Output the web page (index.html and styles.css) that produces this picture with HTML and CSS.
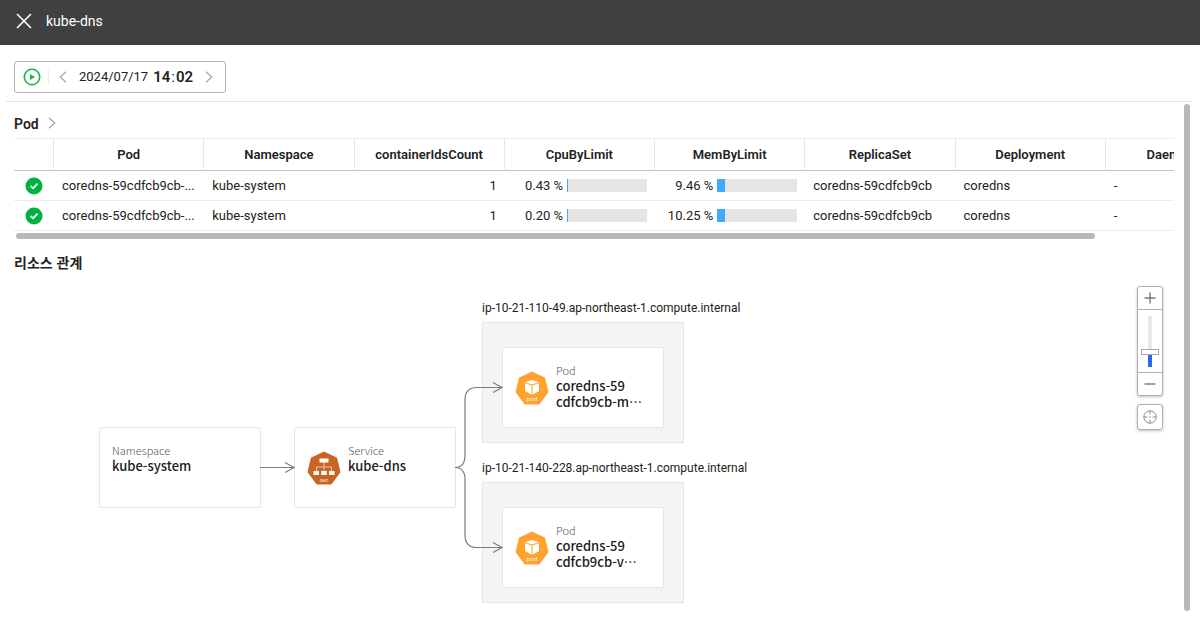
FILE: index.html
```html
<!DOCTYPE html>
<html lang="ko">
<head>
<meta charset="utf-8">
<title>kube-dns</title>
<link rel="stylesheet" href="styles.css">
</head>
<body>
<header class="topbar">
  <button class="icon-button" aria-label="Close">
    <svg width="16" height="16" viewBox="0 0 16 16"><path d="M1 1l14 14M15 1L1 15" fill="none" stroke="#fff" stroke-width="1.6"/></svg>
  </button>
  <h1 class="topbar-title">kube-dns</h1>
</header>

<div class="toolbar">
  <div class="timebox">
    <button class="icon-button" aria-label="Play">
      <svg width="18" height="18" viewBox="0 0 18 18"><circle cx="9" cy="9" r="7.7" fill="none" stroke="#12b84a" stroke-width="1.6"/><path d="M7 6l5 3-5 3z" fill="#12b84a"/></svg>
    </button>
    <span class="divider"></span>
    <button class="icon-button" aria-label="Previous">
      <svg width="8" height="12" viewBox="0 0 8 12"><path d="M7 .7L1.2 6 7 11.3" fill="none" stroke="#a8a8a8" stroke-width="1.3"/></svg>
    </button>
    <time class="time" datetime="2024-07-17T14:02"><span>2024/07/17</span><span class="clock"><b>14</b><span>:</span><b>02</b></span></time>
    <button class="icon-button" aria-label="Next">
      <svg width="8" height="12" viewBox="0 0 8 12"><path d="M1 .7L6.8 6 1 11.3" fill="none" stroke="#a8a8a8" stroke-width="1.3"/></svg>
    </button>
  </div>
</div>

<main class="panel">
  <div class="content">
    <h2 class="section-title">Pod
      <svg width="8" height="12" viewBox="0 0 8 12"><path d="M1 .7L6.8 6 1 11.3" fill="none" stroke="#a8a8a8" stroke-width="1.3"/></svg>
    </h2>
    <div class="table-wrap">
      <table class="grid">
        <colgroup><col class="col-status"><col><col><col><col><col><col><col><col></colgroup>
        <thead>
          <tr><th></th><th>Pod</th><th>Namespace</th><th>containerIdsCount</th><th>CpuByLimit</th><th>MemByLimit</th><th>ReplicaSet</th><th>Deployment</th><th>DaemonSet</th></tr>
        </thead>
        <tbody>
          <tr>
            <td class="status"><svg width="18" height="18" viewBox="0 0 18 18"><circle cx="9" cy="9" r="8.5" fill="#00b341"/><path d="M5.6 9l2.5 2.3 4.4-4.6" fill="none" stroke="#fff" stroke-width="1.8"/></svg></td>
            <td>coredns-59cdfcb9cb-...</td><td>kube-system</td><td class="num">1</td>
            <td><div class="usage">0.43 %<span class="bar"><span class="fill" style="width:0.43%"></span></span></div></td>
            <td><div class="usage">9.46 %<span class="bar"><span class="fill" style="width:9.46%"></span></span></div></td>
            <td>coredns-59cdfcb9cb</td><td>coredns</td><td>-</td>
          </tr>
          <tr>
            <td class="status"><svg width="18" height="18" viewBox="0 0 18 18"><circle cx="9" cy="9" r="8.5" fill="#00b341"/><path d="M5.6 9l2.5 2.3 4.4-4.6" fill="none" stroke="#fff" stroke-width="1.8"/></svg></td>
            <td>coredns-59cdfcb9cb-...</td><td>kube-system</td><td class="num">1</td>
            <td><div class="usage">0.20 %<span class="bar"><span class="fill" style="width:0.2%"></span></span></div></td>
            <td><div class="usage">10.25 %<span class="bar"><span class="fill" style="width:10.25%"></span></span></div></td>
            <td>coredns-59cdfcb9cb</td><td>coredns</td><td>-</td>
          </tr>
        </tbody>
      </table>
    </div>
    <div class="hscroll"><div class="hthumb"></div></div>
    <h2 class="section-title section-title-ko">리소스 관계</h2>

    <div class="canvas">
      <div class="node node-namespace">
        <div><div class="kind">Namespace</div><div class="name">kube-system</div></div>
      </div>
      <div class="node node-service">
        <svg class="node-icon" width="34" height="34" viewBox="0 0 34 34">
          <path d="M17 1.6L29.2 7.5 32.4 20.8 23.9 32.4H10.1L1.6 20.8 4.8 7.5z" fill="#c96424" stroke="#c96424" stroke-width="2" stroke-linejoin="round"/>
          <path d="M17 11v9M9.5 20v-4h15v4" fill="none" stroke="#e9c3ab"/>
          <path d="M12.5 7.5h9v4h-9zM6.5 20H12v4H6.5zM14.2 20h5.6v4h-5.6zM22 20h5.5v4H22z" fill="#fff"/>
          <text x="17" y="31" text-anchor="middle" class="badge-text">svc</text>
        </svg>
        <div><div class="kind">Service</div><div class="name">kube-dns</div></div>
      </div>
      <section class="host host-a">
        <h3 class="host-name">ip-10-21-110-49.ap-northeast-1.compute.internal</h3>
        <div class="host-box">
          <div class="node">
            <svg class="node-icon" width="34" height="34" viewBox="0 0 34 34">
              <path d="M17 1.6L29.2 7.5 32.4 20.8 23.9 32.4H10.1L1.6 20.8 4.8 7.5z" fill="#ffa22e" stroke="#ffa22e" stroke-width="2" stroke-linejoin="round"/>
              <path d="M17 9.1l7 2.2-7 2.3-7-2.3zM10 12.3l6.5 2.2v9.2L10 20zM24 12.3l-6.5 2.2v9.2L24 20z" fill="#fff"/>
              <text x="17" y="30" text-anchor="middle" class="badge-text">pod</text>
            </svg>
            <div><div class="kind">Pod</div><div class="name"><div>coredns-59</div><div>cdfcb9cb-m⋯</div></div></div>
          </div>
        </div>
      </section>
      <section class="host host-b">
        <h3 class="host-name">ip-10-21-140-228.ap-northeast-1.compute.internal</h3>
        <div class="host-box">
          <div class="node">
            <svg class="node-icon" width="34" height="34" viewBox="0 0 34 34">
              <path d="M17 1.6L29.2 7.5 32.4 20.8 23.9 32.4H10.1L1.6 20.8 4.8 7.5z" fill="#ffa22e" stroke="#ffa22e" stroke-width="2" stroke-linejoin="round"/>
              <path d="M17 9.1l7 2.2-7 2.3-7-2.3zM10 12.3l6.5 2.2v9.2L10 20zM24 12.3l-6.5 2.2v9.2L24 20z" fill="#fff"/>
              <text x="17" y="30" text-anchor="middle" class="badge-text">pod</text>
            </svg>
            <div><div class="kind">Pod</div><div class="name"><div>coredns-59</div><div>cdfcb9cb-v⋯</div></div></div>
          </div>
        </div>
      </section>
      <svg class="edges" width="700" height="330" viewBox="0 0 700 330" fill="none" stroke="#7c7c7c" stroke-width="1.2">
        <path d="M246 187.500h34M271 182.500l9 5-9 5"/>
        <path d="M441 187.500q10 0 10-12V120q0-12.500 12-12.500h25M479 102.500l9 5-9 5"/>
        <path d="M441 187.500q10 0 10 12V255q0 12.500 12 12.500h25M479 262.500l9 5-9 5"/>
      </svg>

      <div class="controls">
        <div class="zoom">
          <button class="tool" aria-label="Zoom in"><svg width="12" height="12" viewBox="0 0 12 12"><path d="M6 .5v11M.5 6h11" stroke="#777" stroke-width="1.4"/></svg></button>
          <div class="zoom-track"><input class="slider" type="range" min="0" max="100" value="27" aria-label="Zoom"></div>
          <button class="tool" aria-label="Zoom out"><svg width="12" height="12" viewBox="0 0 12 12"><path d="M.5 6h11" stroke="#777" stroke-width="1.4"/></svg></button>
        </div>
        <button class="tool tool-center" aria-label="Center">
          <svg width="14" height="14" viewBox="0 0 14 14" fill="none" stroke="#8a8a8a"><circle cx="7" cy="7" r="6.2"/><path d="M7 1v3.300M7 9.700V13M1 7h3.300M9.700 7H13"/><circle cx="7" cy="7" r=".8" fill="#8a8a8a" stroke="none"/></svg>
        </button>
      </div>
    </div>
  </div>
  <div class="vscroll"></div>
</main>
</body>
</html>
```
FILE: styles.css
```css
* { box-sizing: border-box; }
body {
  margin: 0;
  min-height: 100vh;
  display: flex;
  flex-direction: column;
  background: #fff;
  color: #222;
  font-family: Roboto, "Noto Sans CJK KR", sans-serif;
  font-size: 13px;
  line-height: 16px;
}
h1, h2, h3 { margin: 0; font-weight: 400; }
svg { display: block; flex: none; }
.badge-text { font-family: "Open Sans", sans-serif; font-size: 6px; fill: #fff; }

.icon-button { display: flex; padding: 0; border: 0; background: none; cursor: pointer; }

.topbar {
  display: flex;
  align-items: center;
  gap: 14px;
  height: 45px;
  padding: 0 16px 3px;
  background: #404040;
  color: #fff;
}
.topbar-title { font-size: 14px; }

.toolbar { padding: 16px 14px 8px; display: flex; }
.timebox {
  display: flex;
  align-items: center;
  height: 32px;
  padding: 0 12px 0 8px;
  border: 1px solid #b5b5b5;
  border-radius: 3px;
}
.divider { width: 1px; height: 14px; margin: 0 10px 0 7px; background: #ececec; }
.time { display: flex; align-items: center; gap: 5px; margin: 0 12px; }
.clock { display: flex; gap: 1px; font-size: 15px; }
.clock b { font-weight: 600; }

.panel {
  flex: 1;
  display: flex;
  margin: 0 8px 0 6px;
  border-top: 1px solid #e4e4e4;
}
.content { flex: 1; min-width: 0; margin: 0 10px 0 8px; }
.vscroll {
  width: 6px;
  margin: 2px 2px 25px 0;
  border-radius: 3px;
  background: #b8b8b8;
}

.section-title {
  display: flex;
  align-items: center;
  gap: 9px;
  padding: 14px 0 5px;
  font-size: 14px;
  line-height: 17px;
  font-weight: 600;
}
.section-title svg { margin-bottom: 4px; }
.section-title-ko { padding: 13px 0 9px; font-family: "Noto Sans CJK KR", sans-serif; font-weight: 700; }

.table-wrap { overflow: hidden; border-top: 1px solid #ececec; }
.grid { width: 1242px; table-layout: fixed; border-collapse: separate; border-spacing: 0; }
.col-status { width: 40px; }
.grid th {
  height: 32px;
  padding: 0;
  border-right: 1px solid #e8e8e8;
  border-bottom: 1px solid #c4c4c4;
  font-weight: 600;
}
.grid td {
  height: 30px;
  padding: 0 8px;
  border-bottom: 1px solid #ececec;
  white-space: nowrap;
}
.grid .status { padding: 0 11px; }
.num { text-align: right; }
.usage { display: flex; justify-content: flex-end; align-items: center; gap: 4px; }
.bar { width: 80px; height: 13px; background: #e5e5e5; }
.fill { display: block; height: 100%; min-width: 1px; background: #40a9ff; }

.hscroll { padding: 2px; }
.hthumb { width: 93.33%; height: 6px; border-radius: 3px; background: #b8b8b8; }

.canvas { position: relative; height: 330px; }
.edges { position: absolute; left: 0; top: 0; }
.node {
  display: flex;
  gap: 7px;
  width: 162px;
  height: 81px;
  padding: 14px 12px;
  border: 1px solid #e6e6e6;
  border-radius: 2px;
  background: #fff;
  font-family: "Noto Sans CJK KR", sans-serif;
}
.node-icon { align-self: center; }
.node-namespace { position: absolute; left: 85px; top: 147px; }
.node-service { position: absolute; left: 280px; top: 147px; }
.kind { font-size: 11px; color: #555; font-weight: 300; }
.name { font-size: 13px; font-weight: 500; color: #222; white-space: nowrap; }

.host { position: absolute; left: 468px; }
.host-a { top: 20px; }
.host-b { top: 180px; }
.host-name { font-size: 12px; white-space: nowrap; margin-bottom: 6px; }
.host-box { width: 202px; padding: 24px 19px 14px; border: 1px solid #e6e6e6; background: #f4f4f4; }

.controls { position: absolute; right: 11px; top: 6px; width: 26px; display: grid; gap: 8px; }
.zoom, .tool-center {
  border: 1px solid #b0b0b0;
  border-radius: 3px;
  background: #fff;
  box-shadow: 0 1px 3px rgba(0, 0, 0, 0.25);
}
.tool { display: flex; align-items: center; justify-content: center; width: 100%; height: 22px; padding: 0; border: 0; background: #fff; border-radius: 3px; }
.tool.tool-center { height: 26px; border: 1px solid #b0b0b0; }
.zoom-track {
  display: flex;
  justify-content: center;
  padding: 6px 0 5px;
  border-top: 1px solid #b0b0b0;
  border-bottom: 1px solid #b0b0b0;
}
.slider {
  appearance: none;
  writing-mode: vertical-lr;
  direction: rtl;
  width: 18px;
  height: 51px;
  margin: 0;
  background: linear-gradient(to top, #2a6af0 25%, #e8e8e8 25%) center / 4px 100% no-repeat;
}
.slider::-webkit-slider-thumb {
  appearance: none;
  width: 18px;
  height: 6px;
  border: 1px solid #aaa;
  background: #fff;
}
```
